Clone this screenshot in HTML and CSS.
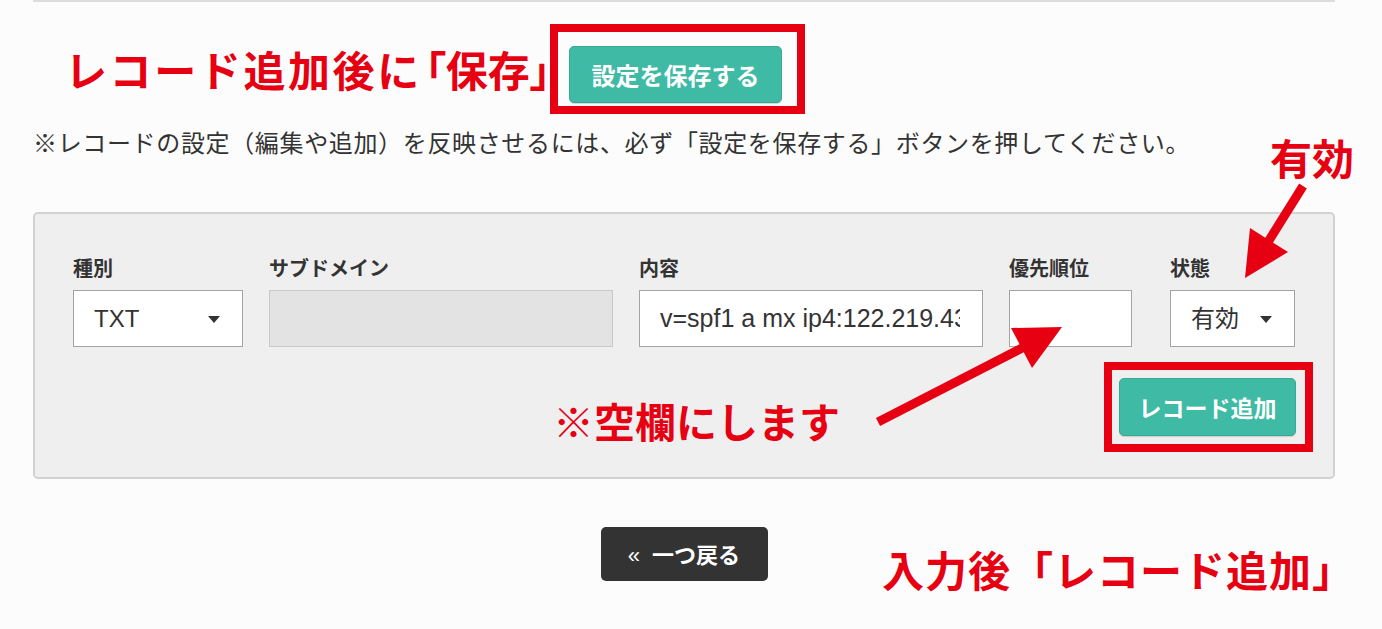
FILE: index.html
```html
<!DOCTYPE html>
<html lang="ja">
<head>
<meta charset="utf-8">
<title>レコード追加</title>
<link rel="stylesheet" href="styles.css">
</head>
<body>
<div class="page">
  <div class="container">
    <div class="save-row">
      <div class="anno-heading">レコード追加後に<span class="br br-open">「</span><span class="tight">保存</span><span class="br">」</span></div>
      <div class="red-frame save-frame"><button class="btn-teal btn-save">設定を保存する</button></div>
    </div>
    <p class="note">※レコードの設定（編集や追加）を反映させるには、必ず「設定を保存する」ボタンを押してください。</p>
    <div class="panel">
      <div class="fields">
        <div class="field">
          <div class="label">種別</div>
          <div class="control select">TXT<span class="caret"></span></div>
        </div>
        <div class="field">
          <div class="label">サブドメイン</div>
          <div class="control disabled"></div>
        </div>
        <div class="field">
          <div class="label">内容</div>
          <div class="control text"><div class="val">v=spf1 a mx ip4:122.219.43</div></div>
        </div>
        <div class="field">
          <div class="label">優先順位</div>
          <div class="control"></div>
        </div>
        <div class="field field-status">
          <div class="label">状態</div>
          <div class="control select">有効<span class="caret"></span></div>
        </div>
      </div>
      <div class="actions">
        <div class="red-frame add-frame"><button class="btn-teal btn-add">レコード追加</button></div>
      </div>
      <div class="anno anno-blank">※空欄にします</div>
    </div>
    <div class="bottom">
      <button class="btn-back"><span class="chev">«</span>一つ戻る</button>
      <div class="anno anno-after">入力後「レコード追加」</div>
    </div>
  </div>
  <div class="anno anno-valid">有効</div>
  <svg class="arrows" width="1382" height="629" viewBox="0 0 1382 629">
    <line x1="878" y1="422" x2="1024" y2="347" stroke="#e60012" stroke-width="9"/>
    <polygon points="1062,327 1032,368 1011,328" fill="#e60012"/>
    <line x1="1303" y1="186" x2="1268" y2="242" stroke="#e60012" stroke-width="9"/>
    <polygon points="1245,278 1250,228 1288,252" fill="#e60012"/>
  </svg>
</div>
</body>
</html>
```

FILE: styles.css
```css
* { box-sizing: border-box; }

html, body {
  margin: 0;
  padding: 0;
  background: #fcfcfc;
}

body {
  font-family: "Liberation Sans", "Noto Sans CJK JP", sans-serif;
  color: #333;
}

.page {
  position: relative;
  width: 1382px;
  height: 629px;
  overflow: hidden;
}

.container {
  margin-left: 33px;
  width: 1302px;
  border-top: 2px solid #dcdcdc;
}

/* save row */
.save-row {
  display: flex;
  align-items: center;
  margin-top: 22px;
  height: 90px;
}

.anno-heading {
  flex: 0 0 480px;
  width: 480px;
  min-width: 0;
  margin-left: 32px;
  font-family: "Noto Sans CJK JP", sans-serif;
  font-weight: 700;
  font-size: 42px;
  line-height: 1;
  letter-spacing: 2.6px;
  color: #e60012;
  white-space: nowrap;
}

.br {
  font-feature-settings: "palt";
  letter-spacing: 0;
}

.br-open {
  margin-left: 3px;
}

.tight {
  letter-spacing: 0;
}

.red-frame {
  border: 8px solid #e60012;
  display: flex;
  position: relative;
}

.save-frame {
  margin-left: 5px;
  padding: 14px 15px 3px 11px;
}

.btn-teal {
  border: 1px solid #38a994;
  border-radius: 5px;
  background: #3fbaa5;
  color: #fff;
  font-family: "Noto Sans CJK JP", sans-serif;
  font-weight: 700;
  font-size: 23px;
  line-height: 1;
  padding: 0;
  box-shadow: 0 1px 1px rgba(0, 0, 0, 0.15);
}

.btn-save {
  width: 213px;
  height: 57px;
  font-size: 24px;
}

.note {
  margin: 10px 0 0 0;
  font-family: "Noto Sans CJK JP", sans-serif;
  font-size: 24px;
  line-height: 36px;
  letter-spacing: 0.65px;
  color: #333;
  white-space: nowrap;
}

/* panel */
.panel {
  position: relative;
  margin-top: 52px;
  background: #efefef;
  border: 2px solid #d2d2d2;
  border-radius: 5px;
  padding: 42px 38px 25px 38px;
}

.fields {
  display: grid;
  grid-template-columns: 170px 344px 344px 123px 137px;
  column-gap: 26px;
}

.field-status {
  margin-left: 12px;
}

.label {
  font-family: "Noto Sans CJK JP", sans-serif;
  font-weight: 700;
  font-size: 20px;
  line-height: 24px;
  color: #333;
  margin-bottom: 10px;
  white-space: nowrap;
}

.control {
  position: relative;
  height: 57px;
  background: #fff;
  border: 1px solid #a4a4a4;
  font-size: 24px;
  line-height: 55px;
  padding: 0 20px;
  color: #333;
  white-space: nowrap;
  overflow: hidden;
}

.control.text {
  padding: 0 22px 0 20px;
}

.val {
  overflow: hidden;
  white-space: nowrap;
  font-size: 25px;
}

.control.disabled {
  background: #e3e3e3;
  border-color: #c8c8c8;
}

.caret {
  position: absolute;
  right: 22px;
  top: 25px;
  width: 0;
  height: 0;
  border-left: 6px solid transparent;
  border-right: 6px solid transparent;
  border-top: 7px solid #333;
}

.actions {
  display: flex;
  justify-content: flex-end;
  margin-top: 15px;
  margin-right: -18px;
}

.add-frame {
  padding: 8px 9px 8px 7px;
}

.btn-add {
  width: 177px;
  height: 58px;
}

/* bottom */
.bottom {
  position: relative;
  margin-top: 48px;
  height: 54px;
  display: flex;
  justify-content: center;
}

.btn-back {
  width: 167px;
  height: 54px;
  border: none;
  border-radius: 5px;
  background: #333;
  color: #fff;
  font-family: "Noto Sans CJK JP", sans-serif;
  font-weight: 700;
  font-size: 22px;
  line-height: 1;
  padding: 0;
}

.chev {
  font-family: "Liberation Sans", sans-serif;
  font-weight: 400;
  margin-right: 12px;
}

/* annotations */
.anno {
  position: absolute;
  font-family: "Noto Sans CJK JP", sans-serif;
  font-weight: 700;
  color: #e60012;
  line-height: 1;
  white-space: nowrap;
}

.anno-blank {
  left: 518px;
  top: 186px;
  font-size: 41px;
}

.anno-after {
  left: 849px;
  top: 21px;
  font-size: 42px;
  letter-spacing: 1px;
}

.anno-valid {
  left: 1270px;
  top: 136px;
  font-size: 42px;
}

.arrows {
  position: absolute;
  left: 0;
  top: 0;
  pointer-events: none;
}
```
